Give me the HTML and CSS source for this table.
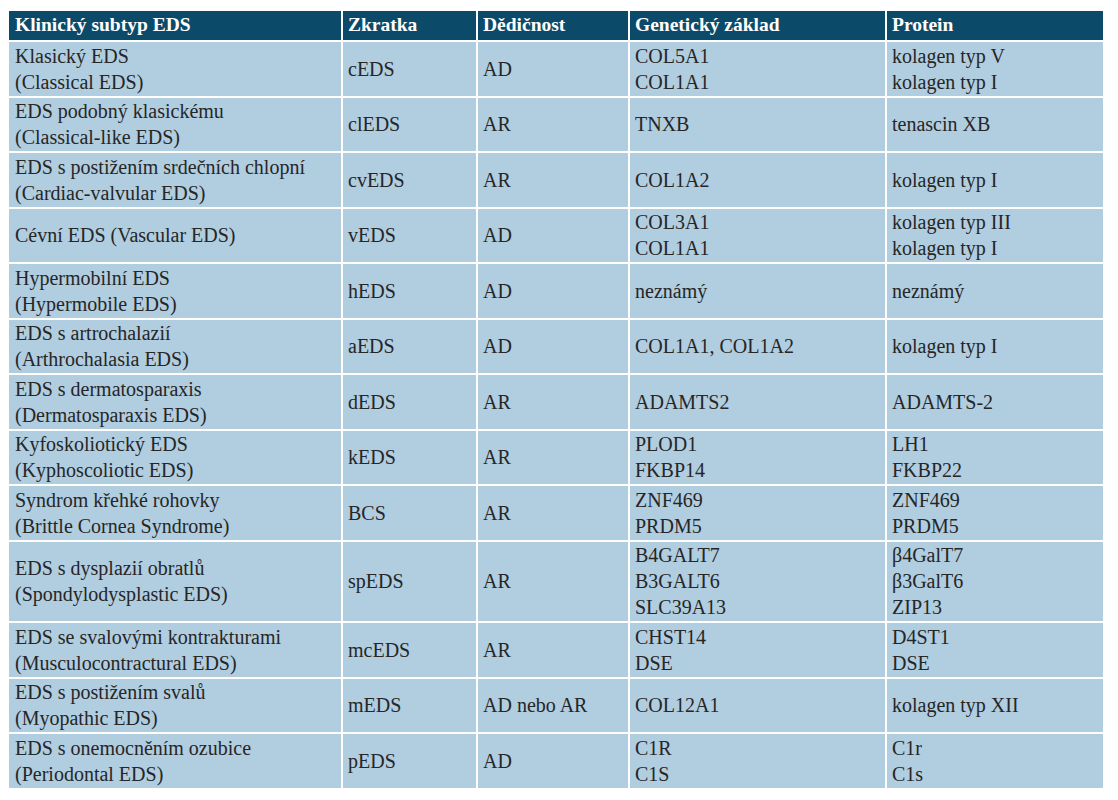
FILE: index.html
```html
<!DOCTYPE html>
<html lang="cs">
<head>
<meta charset="utf-8">
<title>Klinické subtypy EDS</title>
<link rel="stylesheet" href="styles.css">
</head>
<body>
<table class="eds">
  <colgroup>
    <col class="c1"><col class="c2"><col class="c3"><col class="c4"><col class="c5">
  </colgroup>
  <thead>
    <tr><th>Klinický subtyp EDS</th><th>Zkratka</th><th>Dědičnost</th><th>Genetický základ</th><th>Protein</th></tr>
  </thead>
  <tbody>
    <tr><td>Klasický EDS<br>(Classical EDS)</td><td>cEDS</td><td>AD</td><td>COL5A1<br>COL1A1</td><td>kolagen typ V<br>kolagen typ I</td></tr>
    <tr><td>EDS podobný klasickému<br>(Classical-like EDS)</td><td>clEDS</td><td>AR</td><td>TNXB</td><td>tenascin XB</td></tr>
    <tr><td>EDS s postižením srdečních chlopní<br>(Cardiac-valvular EDS)</td><td>cvEDS</td><td>AR</td><td>COL1A2</td><td>kolagen typ I</td></tr>
    <tr><td>Cévní EDS (Vascular EDS)</td><td>vEDS</td><td>AD</td><td>COL3A1<br>COL1A1</td><td>kolagen typ III<br>kolagen typ I</td></tr>
    <tr><td>Hypermobilní EDS<br>(Hypermobile EDS)</td><td>hEDS</td><td>AD</td><td>neznámý</td><td>neznámý</td></tr>
    <tr><td>EDS s artrochalazií<br>(Arthrochalasia EDS)</td><td>aEDS</td><td>AD</td><td>COL1A1, COL1A2</td><td>kolagen typ I</td></tr>
    <tr><td>EDS s dermatosparaxis<br>(Dermatosparaxis EDS)</td><td>dEDS</td><td>AR</td><td>ADAMTS2</td><td>ADAMTS-2</td></tr>
    <tr><td>Kyfoskoliotický EDS<br>(Kyphoscoliotic EDS)</td><td>kEDS</td><td>AR</td><td>PLOD1<br>FKBP14</td><td>LH1<br>FKBP22</td></tr>
    <tr><td>Syndrom křehké rohovky<br>(Brittle Cornea Syndrome)</td><td>BCS</td><td>AR</td><td>ZNF469<br>PRDM5</td><td>ZNF469<br>PRDM5</td></tr>
    <tr><td>EDS s dysplazií obratlů<br>(Spondylodysplastic EDS)</td><td>spEDS</td><td>AR</td><td>B4GALT7<br>B3GALT6<br>SLC39A13</td><td>β4GalT7<br>β3GalT6<br>ZIP13</td></tr>
    <tr><td>EDS se svalovými kontrakturami<br>(Musculocontractural EDS)</td><td>mcEDS</td><td>AR</td><td>CHST14<br>DSE</td><td>D4ST1<br>DSE</td></tr>
    <tr><td>EDS s postižením svalů<br>(Myopathic EDS)</td><td>mEDS</td><td>AD nebo AR</td><td>COL12A1</td><td>kolagen typ XII</td></tr>
    <tr><td>EDS s onemocněním ozubice<br>(Periodontal EDS)</td><td>pEDS</td><td>AD</td><td>C1R<br>C1S</td><td>C1r<br>C1s</td></tr>
  </tbody>
</table>
</body>
</html>
```

FILE: styles.css
```css
html, body {
  margin: 0;
  padding: 0;
  background: #ffffff;
}

body {
  padding: 11px 0 0 9px;
  font-family: "Liberation Serif", "Times New Roman", serif;
  font-size: 20px;
  color: #262626;
}

.eds {
  border-collapse: separate;
  border-spacing: 0;
  table-layout: fixed;
  width: 1094px;
}

.c1 { width: 334px; }
.c2 { width: 135px; }
.c3 { width: 152px; }
.c4 { width: 257px; }
.c5 { width: 216px; }

.eds th,
.eds td {
  line-height: 26px;
  text-align: left;
  vertical-align: middle;
  border-right: 2px solid #ffffff;
  border-bottom: 2px solid #ffffff;
  white-space: nowrap;
}

.eds th {
  padding: 1px 4px 2px 5px;
  font-size: 19.5px;
  background: #0b4b69;
  color: #ffffff;
  font-weight: bold;
}

.eds td {
  padding: 0.5px 4px 1px 5px;
  background: #b1cde0;
}

.eds th:first-child,
.eds td:first-child {
  padding-left: 6px;
}

.eds th:last-child,
.eds td:last-child {
  border-right: none;
}

.eds tbody tr:last-child td {
  border-bottom: none;
}
```
